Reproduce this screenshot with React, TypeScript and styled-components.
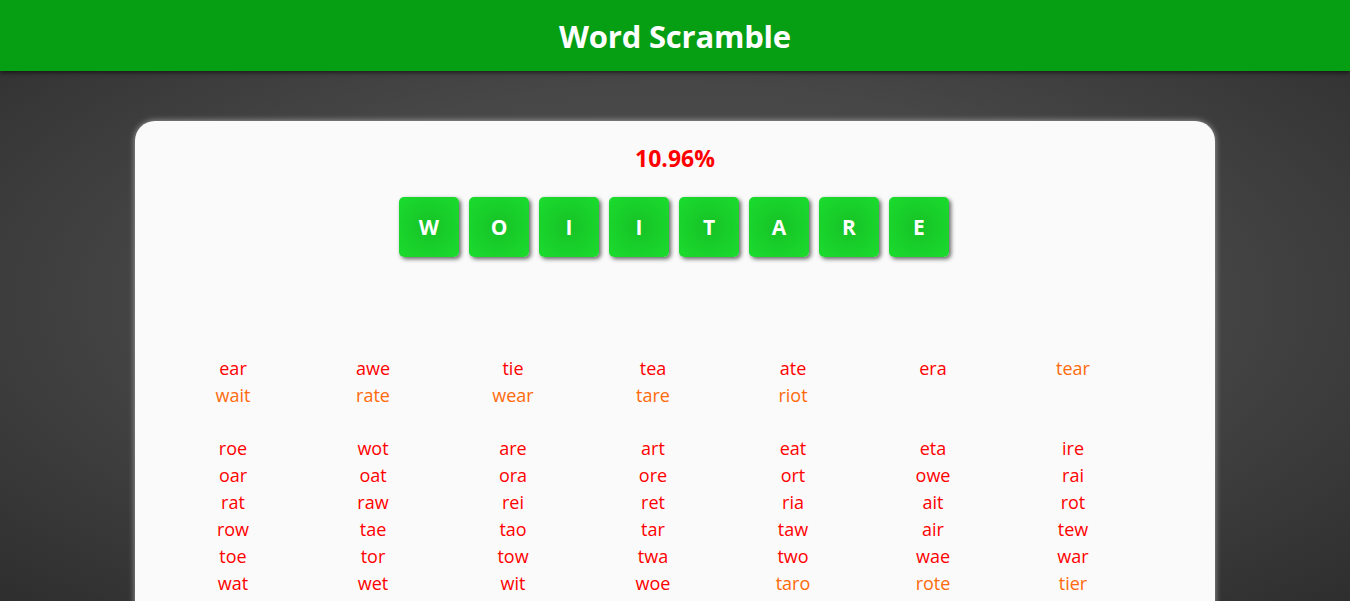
import * as React from 'react';
import styled, { createGlobalStyle } from 'styled-components';

const letters = ['W', 'O', 'I', 'I', 'T', 'A', 'R', 'E'];

const groups: { text: string; long?: boolean }[][] = [
  [
    { text: 'ear' },
    { text: 'awe' },
    { text: 'tie' },
    { text: 'tea' },
    { text: 'ate' },
    { text: 'era' },
    { text: 'tear', long: true },
    { text: 'wait', long: true },
    { text: 'rate', long: true },
    { text: 'wear', long: true },
    { text: 'tare', long: true },
    { text: 'riot', long: true },
  ],
  [
    'roe', 'wot', 'are', 'art', 'eat', 'eta', 'ire',
    'oar', 'oat', 'ora', 'ore', 'ort', 'owe', 'rai',
    'rat', 'raw', 'rei', 'ret', 'ria', 'ait', 'rot',
    'row', 'tae', 'tao', 'tar', 'taw', 'air', 'tew',
    'toe', 'tor', 'tow', 'twa', 'two', 'wae', 'war',
    'wat', 'wet', 'wit', 'woe',
  ]
    .map((text) => ({ text }))
    .concat([
      { text: 'taro', long: true },
      { text: 'rote', long: true },
      { text: 'tier', long: true },
    ]),
];

const GlobalStyle = createGlobalStyle`
  html, body {
    margin: 0;
    padding: 0;
  }
  body {
    font-family: "Open Sans", "Noto Sans", sans-serif;
    min-height: 100vh;
    background: radial-gradient(ellipse at center, #555 0%, #474747 50%, #2e2e2e 100%);
    background-attachment: fixed;
  }
`;

const $Header = styled.header`
  height: 71px;
  background: #069e13;
  box-shadow: 0 2px 4px #0008;
  display: flex;
  align-items: center;
  justify-content: center;
`;

const $Title = styled.h1`
  margin: 0;
  color: #fff;
  font-size: 31px;
  font-weight: 700;
  letter-spacing: -0.2px;
`;

const $Card = styled.main`
  width: 80%;
  margin: 50px auto 0;
  background: #fafafa;
  border-radius: 20px;
  box-shadow: 0 0 6px #fff8;
  padding: 22px 0 40px;
`;

const $Score = styled.div`
  text-align: center;
  color: #ff0000;
  font-size: 23px;
  font-weight: 700;
  line-height: 30px;
`;

const $Tiles = styled.div`
  display: flex;
  justify-content: center;
  gap: 10px;
  margin-top: 24px;
  padding-right: 2px;
`;

const $Tile = styled.div`
  width: 60px;
  height: 60px;
  border-radius: 5px;
  background: radial-gradient(circle at center, #16c226 0%, #1bdc2e 100%);
  box-shadow: 2px 2px 4px #0009;
  display: flex;
  align-items: center;
  justify-content: center;
  color: #fff;
  font-size: 21px;
  font-weight: 700;
`;

const $Words = styled.div`
  margin: 98px 0 0 28px;
  display: flex;
  flex-direction: column;
  gap: 26px;
`;

const $Group = styled.div`
  display: grid;
  grid-template-columns: repeat(7, 140px);
`;

const $Word = styled.span<{ $long?: boolean }>`
  text-align: center;
  font-size: 18px;
  line-height: 27px;
  color: ${(p) => (p.$long ? '#ff6a0a' : '#ff0000')};
`;

export default function App() {
  return (
    <>
      <GlobalStyle />
      <$Header>
        <$Title>Word Scramble</$Title>
      </$Header>
      <$Card>
        <$Score>10.96%</$Score>
        <$Tiles>
          {letters.map((l, i) => (
            <$Tile key={i}>{l}</$Tile>
          ))}
        </$Tiles>
        <$Words>
          {groups.map((g, gi) => (
            <$Group key={gi}>
              {g.map((w, wi) => (
                <$Word key={wi} $long={w.long}>
                  {w.text}
                </$Word>
              ))}
            </$Group>
          ))}
        </$Words>
      </$Card>
    </>
  );
}
